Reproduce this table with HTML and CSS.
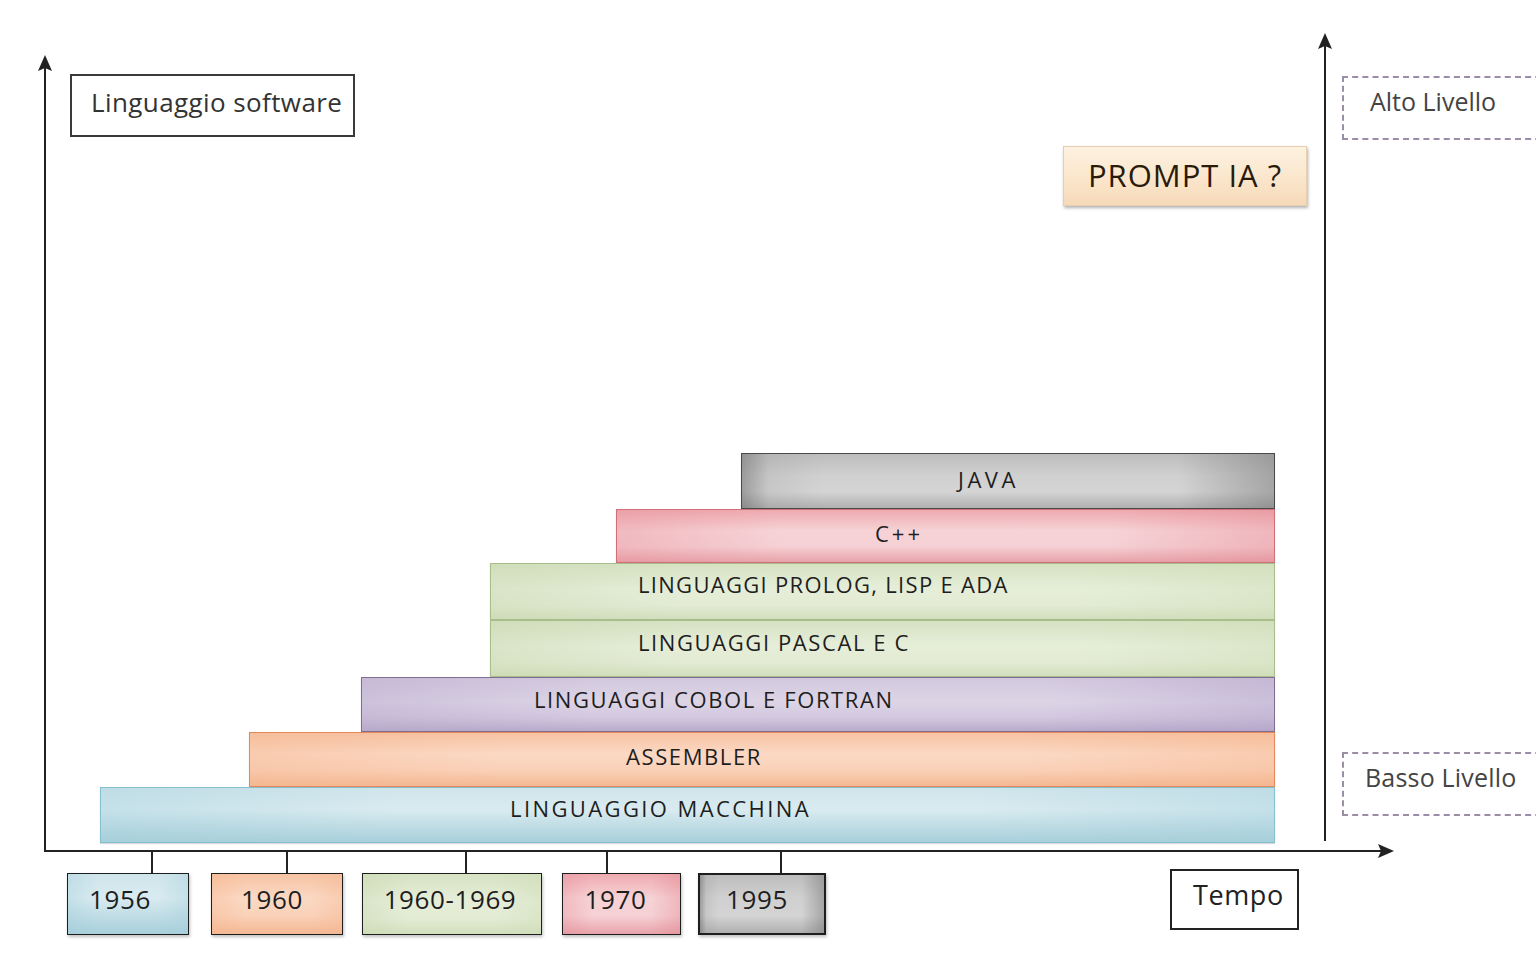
FILE: index.html
```html
<!DOCTYPE html>
<html lang="it">
<head>
<meta charset="utf-8">
<title>Linguaggi software</title>
<link rel="stylesheet" href="styles.css">
</head>
<body>
<div class="canvas">
  <svg class="axes" width="1536" height="970" viewBox="0 0 1536 970">
    <g stroke="#222" stroke-width="2" fill="none">
      <line x1="45" y1="66" x2="45" y2="852"/>
      <line x1="44" y1="851" x2="1382" y2="851"/>
      <line x1="1325" y1="44" x2="1325" y2="841"/>
      <line x1="152" y1="851" x2="152" y2="873"/>
      <line x1="287" y1="851" x2="287" y2="873"/>
      <line x1="466" y1="851" x2="466" y2="873"/>
      <line x1="607" y1="851" x2="607" y2="873"/>
      <line x1="781" y1="851" x2="781" y2="873"/>
    </g>
    <g fill="#222">
      <path d="M45 55 L52 71 L45 68 L38 71 Z"/>
      <path d="M1325 33 L1332 49 L1325 46 L1318 49 Z"/>
      <path d="M1394 851 L1378 858 L1381 851 L1378 844 Z"/>
    </g>
  </svg>

  <div class="label label-software">Linguaggio software</div>
  <div class="label label-alto">Alto Livello</div>
  <div class="label label-basso">Basso Livello</div>
  <div class="label label-tempo">Tempo</div>
  <div class="prompt">PROMPT IA ?</div>

  <div class="stack">
    <div class="bar bar-gray b-java">JAVA</div>
    <div class="bar bar-pink b-cpp">C++</div>
    <div class="bar bar-green b-prolog">LINGUAGGI PROLOG, LISP E ADA</div>
    <div class="bar bar-green b-pascal">LINGUAGGI PASCAL E C</div>
    <div class="bar bar-purple b-cobol">LINGUAGGI COBOL E FORTRAN</div>
    <div class="bar bar-orange b-asm">ASSEMBLER</div>
    <div class="bar bar-blue b-mac">LINGUAGGIO MACCHINA</div>
  </div>

  <div class="year y-1956 bar-blue">1956</div>
  <div class="year y-1960 bar-orange">1960</div>
  <div class="year y-6069 bar-green">1960-1969</div>
  <div class="year y-1970 bar-pink">1970</div>
  <div class="year y-1995 bar-gray">1995</div>
</div>
</body>
</html>
```

FILE: styles.css
```css
* { box-sizing: border-box; }
html, body { margin: 0; padding: 0; background: #fff; }
body {
  font-family: "Open Sans", "Noto Sans", "DejaVu Sans", sans-serif;
  color: #222;
  overflow: hidden;
}
.canvas {
  position: relative;
  width: 1536px;
  height: 970px;
  overflow: hidden;
  background: #fff;
}
.axes { position: absolute; left: 0; top: 0; }

.label {
  position: absolute;
  display: flex;
  align-items: center;
  font-size: 26px;
  letter-spacing: 0.4px;
  color: #333;
  white-space: nowrap;
}
.label-software {
  left: 70px; top: 74px; width: 285px; height: 63px;
  border: 2px solid #3a3a3a;
  padding-left: 19px;
  padding-bottom: 8px;
}
.label-tempo {
  left: 1170px; top: 869px; width: 129px; height: 61px;
  border: 2px solid #222;
  padding-left: 21px;
  padding-bottom: 10px;
  font-size: 27px;
  letter-spacing: 0.6px;
  color: #222;
}
.label-alto, .label-basso {
  border: 2px dashed #9b8ca8;
  height: 64px;
  width: 240px;
  color: #444;
  font-size: 25px;
}
.label-alto { left: 1342px; top: 76px; padding-left: 26px; padding-bottom: 14px; letter-spacing: 0; }
.label-basso { left: 1342px; top: 752px; padding-left: 21px; padding-bottom: 15px; letter-spacing: 0.2px; }

.prompt {
  position: absolute;
  left: 1063px; top: 146px; width: 244px; height: 60px;
  display: flex; align-items: center; justify-content: center;
  font-size: 31px;
  letter-spacing: 1px;
  color: #2a1a0a;
  border: 1px solid #e6cfb0;
  background: linear-gradient(180deg, #fdf1e0 0%, #fbe6cc 55%, #f5d9b8 100%);
  box-shadow: 1px 2px 3px rgba(0,0,0,0.3);
  padding-bottom: 3px;
}

.stack {
  position: absolute;
  left: 100px; top: 453px; width: 1175px;
  display: flex;
  flex-direction: column;
}
.bar {
  display: flex;
  align-items: center;
  font-size: 22px;
  letter-spacing: 1.6px;
  color: #1e1e1e;
  white-space: nowrap;
  border: 1px solid;
  padding-bottom: 9px;
  box-shadow: 0 1px 1px rgba(0,0,0,0.15);
}
.b-java   { margin-left: 641px; height: 56px; padding-left: 216px; padding-bottom: 4px; letter-spacing: 3.5px; }
.b-cpp    { margin-left: 516px; height: 54px; padding-left: 258px; padding-bottom: 6px; letter-spacing: 3px; }
.b-prolog { margin-left: 390px; height: 57px; padding-left: 147px; padding-bottom: 16px; letter-spacing: 1.3px; }
.b-pascal { margin-left: 390px; height: 57px; padding-left: 147px; padding-bottom: 14px; }
.b-cobol  { margin-left: 261px; height: 55px; padding-left: 172px; padding-bottom: 11px; }
.b-asm    { margin-left: 149px; height: 55px; padding-left: 376px; padding-bottom: 7px; }
.b-mac    { margin-left: 0;     height: 56px; padding-left: 409px; padding-bottom: 15px; letter-spacing: 2.4px; }

.bar-gray {
  border-color: #4a4a4a;
  background:
    linear-gradient(90deg, rgba(90,90,90,0.45) 0%, rgba(150,150,150,0.2) 5%, rgba(0,0,0,0) 15%, rgba(0,0,0,0) 82%, rgba(110,110,110,0.45) 100%),
    linear-gradient(180deg, #bdbdbd 0%, #d0d0d0 40%, #d4d4d4 70%, #b0b0b0 100%);
}
.bar-pink {
  border-color: #cf6f78;
  background:
    linear-gradient(90deg, rgba(230,140,150,0.35) 0%, rgba(0,0,0,0) 25%, rgba(0,0,0,0) 75%, rgba(225,130,140,0.35) 100%),
    linear-gradient(180deg, #eeaab0 0%, #f6d3d6 40%, #f5d0d4 70%, #e8a3aa 100%);
}
.bar-green {
  border-color: #a8bc8c;
  background:
    linear-gradient(90deg, rgba(200,215,175,0.4) 0%, rgba(0,0,0,0) 25%, rgba(0,0,0,0) 75%, rgba(205,220,180,0.4) 100%),
    linear-gradient(180deg, #d6e2c2 0%, #e6eed9 45%, #e3ebd4 75%, #d2dfbd 100%);
}
.bar-purple {
  border-color: #7f6e92;
  background:
    linear-gradient(90deg, rgba(180,165,200,0.4) 0%, rgba(0,0,0,0) 25%, rgba(0,0,0,0) 75%, rgba(175,160,200,0.4) 100%),
    linear-gradient(180deg, #d2c8de 0%, #ddd5e6 45%, #d2c7df 75%, #b9abcb 100%);
}
.bar-orange {
  border-color: #e4875a;
  background:
    linear-gradient(90deg, rgba(245,180,140,0.35) 0%, rgba(0,0,0,0) 25%, rgba(0,0,0,0) 75%, rgba(245,180,140,0.35) 100%),
    linear-gradient(180deg, #f7c3a3 0%, #fbd9c4 40%, #fad1b8 70%, #f4b893 100%);
}
.bar-blue {
  border-color: #86c0cf;
  background:
    linear-gradient(90deg, rgba(160,205,218,0.35) 0%, rgba(0,0,0,0) 25%, rgba(0,0,0,0) 75%, rgba(160,205,218,0.35) 100%),
    linear-gradient(180deg, #cfe5ec 0%, #d9ebf0 40%, #c0dde5 70%, #a9d0db 100%);
}

.year {
  position: absolute;
  top: 873px;
  height: 62px;
  display: flex; align-items: center; justify-content: center;
  font-size: 26px;
  letter-spacing: 0.6px;
  color: #1e1e1e;
  border: 1px solid;
  box-shadow: 1px 2px 3px rgba(0,0,0,0.25);
  padding-bottom: 10px;
}
.y-1956 { left: 67px;  width: 122px; padding-right: 16px; }
.y-1960 { left: 211px; width: 132px; padding-right: 10px; }
.y-6069 { left: 362px; width: 180px; padding-right: 4px; }
.y-1970 { left: 562px; width: 119px; padding-right: 12px; }
.y-1995 { left: 698px; width: 128px; border-width: 2px; padding-right: 10px; }
```
